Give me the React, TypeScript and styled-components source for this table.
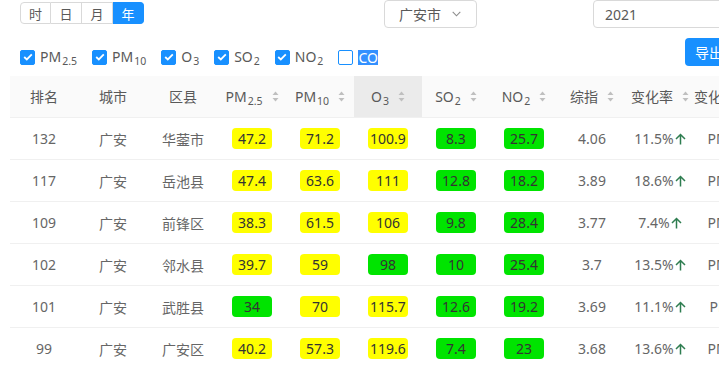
import React from "react";
import styled, { createGlobalStyle } from "styled-components";

const GlobalStyle = createGlobalStyle`
   body {
      margin: 0;
      overflow: hidden;
      background: #fff;
      font-family: "Noto Sans", "Noto Sans CJK SC", sans-serif;
      color: #595959;
   }
`;

const Page = styled.div`
   width: 820px;
   font-size: 14px;
`;

const TopBar = styled.div`
   display: grid;
   grid-template-columns: 364px 209px 180px;
   align-items: end;
   height: 26px;
   padding-left: 20px;
`;

const RadioGroup = styled.div`
   display: flex;
   height: 22px;
   margin-bottom: 4px;
   width: max-content;
`;

const RadioItem = styled.div<{ $active?: boolean }>`
   width: 31px;
   display: flex;
   align-items: center;
   justify-content: center;
   font-size: 13px;
   box-sizing: border-box;
   border: 1px solid ${(p) => (p.$active ? "#1890ff" : "#d9d9d9")};
   border-left-width: 0;
   background: ${(p) => (p.$active ? "#1890ff" : "#fff")};
   color: ${(p) => (p.$active ? "#fff" : "#595959")};

   &:first-child {
      border-left-width: 1px;
      border-radius: 4px 0 0 4px;
   }
   &:last-child {
      border-radius: 0 4px 4px 0;
   }
`;

const Select = styled.div`
   width: 93px;
   height: 28px;
   box-sizing: border-box;
   border: 1px solid #d9d9d9;
   border-radius: 4px;
   display: flex;
   align-items: center;
   gap: 11px;
   padding-left: 14px;
   color: #595959;
`;

const Input = styled.div`
   width: 180px;
   height: 28px;
   box-sizing: border-box;
   border: 1px solid #d9d9d9;
   border-radius: 4px;
   display: flex;
   align-items: center;
   padding-left: 11px;
   color: #595959;
`;

const ToolRow = styled.div`
   display: flex;
   align-items: flex-end;
   box-sizing: border-box;
   width: 733px;
   height: 28px;
   margin-top: 12px;
   padding-left: 20px;
`;

const CheckItem = styled.label`
   display: flex;
   align-items: center;
   height: 18px;
   margin-right: 15px;
`;

const Box = styled.span<{ $checked?: boolean }>`
   width: 15px;
   height: 15px;
   box-sizing: border-box;
   border-radius: 2px;
   border: 1px solid #1890ff;
   background: ${(p) => (p.$checked ? "#1890ff" : "#fff")};
   display: flex;
   align-items: center;
   justify-content: center;
`;

const CheckLabel = styled.span<{ $selected?: boolean }>`
   margin-left: 5px;
   line-height: 15px;
   background: ${(p) => (p.$selected ? "#3390ff" : "transparent")};
   color: ${(p) => (p.$selected ? "#fff" : "#595959")};
`;

const Sub = styled.span`
   font-size: 10.5px;
   position: relative;
   top: 3px;
   margin-left: 1px;
`;

const ExportButton = styled.div`
   margin-left: auto;
   height: 28px;
   padding: 0 10px;
   background: #1890ff;
   color: #fff;
   border-radius: 4px;
   display: flex;
   align-items: center;
`;

const Table = styled.div`
   margin: 10px 0 0 10px;
`;

const cols = "68px 70px 70px repeat(8, 68px)";

const HeadRow = styled.div`
   display: grid;
   grid-template-columns: ${cols};
   height: 41px;
   background: #fafafa;
   border-bottom: 1px solid #f0f0f0;
`;

const HeadCell = styled.div<{ $sorted?: boolean }>`
   display: flex;
   align-items: center;
   justify-content: center;
   gap: 9px;
   white-space: nowrap;
   line-height: 1;
   background: ${(p) => (p.$sorted ? "#ebebeb" : "transparent")};
`;

const Row = styled.div`
   display: grid;
   grid-template-columns: ${cols};
   height: 41px;
   border-bottom: 1px solid #f0f0f0;
`;

const Cell = styled.div`
   display: flex;
   align-items: center;
   justify-content: center;
   white-space: nowrap;
   color: #666;
`;

const Pill = styled.span<{ $level: "good" | "fair" }>`
   width: 40px;
   height: 21px;
   border-radius: 4px;
   display: flex;
   align-items: center;
   justify-content: center;
   background: ${(p) => (p.$level === "good" ? "#00e400" : "#ffff00")};
   color: #333;
`;

const SortIcon = () => (
   <svg width="7" height="11" viewBox="0 0 7 11">
      <path d="M3.5 0.5 L6.5 4 L0.5 4 Z" fill="#bfbfbf" />
      <path d="M3.5 10.5 L6.5 7 L0.5 7 Z" fill="#bfbfbf" />
   </svg>
);

const CheckMark = () => (
   <svg width="10" height="8" viewBox="0 0 10 8">
      <path d="M1.2 4 L3.8 6.4 L8.8 1.3" fill="none" stroke="#fff" strokeWidth="1.8" />
   </svg>
);

const ArrowUp = () => (
   <svg width="11" height="12" viewBox="0 0 11 12" style={{ marginLeft: 1 }}>
      <path d="M5.5 1.5 V11.5 M1 6 L5.5 1.5 L10 6" fill="none" stroke="#2e7d50" strokeWidth="1.5" />
   </svg>
);

const Chevron = () => (
   <svg width="9" height="6" viewBox="0 0 9 6">
      <path d="M0.7 0.8 L4.5 4.8 L8.3 0.8" fill="none" stroke="#8c8c8c" strokeWidth="1.1" />
   </svg>
);

const pollutants: { key: string; label: React.ReactNode; checked: boolean }[] = [
   { key: "pm25", label: <>PM<Sub>2.5</Sub></>, checked: true },
   { key: "pm10", label: <>PM<Sub>10</Sub></>, checked: true },
   { key: "o3", label: <>O<Sub>3</Sub></>, checked: true },
   { key: "so2", label: <>SO<Sub>2</Sub></>, checked: true },
   { key: "no2", label: <>NO<Sub>2</Sub></>, checked: true },
   { key: "co", label: "CO", checked: false },
];

const headers: { title: React.ReactNode; sort?: boolean; sorted?: boolean }[] = [
   { title: "排名" },
   { title: "城市" },
   { title: "区县" },
   { title: <span>PM<Sub>2.5</Sub></span>, sort: true },
   { title: <span>PM<Sub>10</Sub></span>, sort: true },
   { title: <span>O<Sub>3</Sub></span>, sort: true, sorted: true },
   { title: <span>SO<Sub>2</Sub></span>, sort: true },
   { title: <span>NO<Sub>2</Sub></span>, sort: true },
   { title: "综指", sort: true },
   { title: "变化率", sort: true },
   { title: "变化因子", sort: true },
];

type Level = "good" | "fair";
interface Rec {
   rank: number;
   district: string;
   values: [string, Level][];
   index: string;
   rate: string;
   factor: string;
}

const G: Level = "good";
const Y: Level = "fair";

const rows: Rec[] = [
   { rank: 132, district: "华蓥市", values: [["47.2", Y], ["71.2", Y], ["100.9", Y], ["8.3", G], ["25.7", G]], index: "4.06", rate: "11.5%", factor: "PM2.5" },
   { rank: 117, district: "岳池县", values: [["47.4", Y], ["63.6", Y], ["111", Y], ["12.8", G], ["18.2", G]], index: "3.89", rate: "18.6%", factor: "PM2.5" },
   { rank: 109, district: "前锋区", values: [["38.3", Y], ["61.5", Y], ["106", Y], ["9.8", G], ["28.4", G]], index: "3.77", rate: "7.4%", factor: "PM2.5" },
   { rank: 102, district: "邻水县", values: [["39.7", Y], ["59", Y], ["98", G], ["10", G], ["25.4", G]], index: "3.7", rate: "13.5%", factor: "PM2.5" },
   { rank: 101, district: "武胜县", values: [["34", G], ["70", Y], ["115.7", Y], ["12.6", G], ["19.2", G]], index: "3.69", rate: "11.1%", factor: "PM10" },
   { rank: 99, district: "广安区", values: [["40.2", Y], ["57.3", Y], ["119.6", Y], ["7.4", G], ["23", G]], index: "3.68", rate: "13.6%", factor: "PM2.5" },
];

const App: React.FC = () => {
   return (
      <Page>
         <GlobalStyle />
         <TopBar>
            <RadioGroup>
               {["时", "日", "月", "年"].map((t) => (
                  <RadioItem key={t} $active={t === "年"}>
                     {t}
                  </RadioItem>
               ))}
            </RadioGroup>
            <Select>
               广安市
               <Chevron />
            </Select>
            <Input>2021</Input>
         </TopBar>

         <ToolRow>
            {pollutants.map((p) => (
               <CheckItem key={p.key}>
                  <Box $checked={p.checked}>{p.checked && <CheckMark />}</Box>
                  <CheckLabel $selected={p.key === "co"}>{p.label}</CheckLabel>
               </CheckItem>
            ))}
            <ExportButton>导出</ExportButton>
         </ToolRow>

         <Table>
            <HeadRow>
               {headers.map((h, i) => (
                  <HeadCell key={i} $sorted={h.sorted}>
                     {h.title}
                     {h.sort && <SortIcon />}
                  </HeadCell>
               ))}
            </HeadRow>
            {rows.map((r) => (
               <Row key={r.rank}>
                  <Cell>{r.rank}</Cell>
                  <Cell>广安</Cell>
                  <Cell>{r.district}</Cell>
                  {r.values.map(([v, level], i) => (
                     <Cell key={i}>
                        <Pill $level={level}>{v}</Pill>
                     </Cell>
                  ))}
                  <Cell>{r.index}</Cell>
                  <Cell>
                     {r.rate}
                     <ArrowUp />
                  </Cell>
                  <Cell>{r.factor}</Cell>
               </Row>
            ))}
         </Table>
      </Page>
   );
};

export default App;
